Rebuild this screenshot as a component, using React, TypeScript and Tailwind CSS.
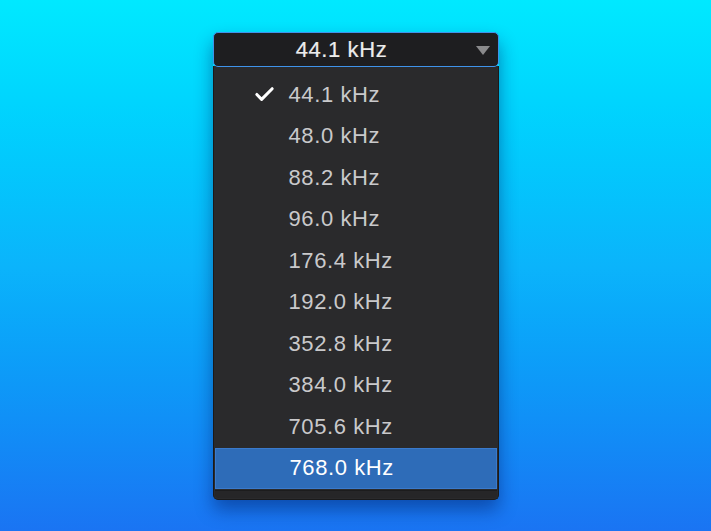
import { Check } from 'lucide-react';

const rates = ['44.1', '48.0', '88.2', '96.0', '176.4', '192.0', '352.8', '384.0', '705.6', '768.0'];

const App = () => {
  const selected = '44.1';
  const hovered = '768.0';
  return (
    <div
      className="w-[711px] h-[531px] bg-gradient-to-b from-[#00e9ff] via-[#0bb4fb] to-[#1a74f3] flex justify-center items-start pt-[32px]"
      style={{ fontFamily: '"Liberation Sans", Arial, sans-serif' }}
    >
      <div className="w-[286px] flex flex-col shadow-[0_10px_18px_rgba(0,20,90,0.45)] rounded-[5px]">
        {/* Trigger */}
        <div className="h-[35px] rounded-[5px] border-[1.5px] border-[#3f93ea] bg-[#1e1e20] flex items-center relative z-10">
          <span className="flex-1 text-center pr-[28px] text-[22px] tracking-[0.6px] text-[#ececec] leading-none [-webkit-text-stroke:0.2px_#ececec]">
            44.1 kHz
          </span>
          <svg className="absolute right-[8px] top-[13px]" width="14" height="9" viewBox="0 0 14 9">
            <path d="M0 0 L14 0 L7 9 Z" fill="#8a8a8c" />
          </svg>
        </div>
        {/* Menu */}
        <div className="bg-[#2a2a2c] border-x border-b border-[#1a1a1b] rounded-b-[5px] pt-[8px] px-[1px] pb-[1px] -mt-[1px]">
          {rates.map((r) => {
            const active = r === hovered;
            return (
              <div
                key={r}
                className={`h-[41.5px] flex items-center ${
                  active ? 'bg-[#2e6cb8] text-white border border-[#3a7acc]' : 'text-[#c9c9cb]'
                }`}
              >
                <div className="w-[74px] flex justify-end pr-[13px]">
                  {r === selected && <Check size={23} strokeWidth={3.2} className="text-white" />}
                </div>
                <span className="text-[22px] tracking-[0.6px] leading-none">{r} kHz</span>
              </div>
            );
          })}
          <div className="h-[8px] mt-[1px] border-t border-[#1c1c1d] bg-[#262628] rounded-b-[4px]" />
        </div>
      </div>
    </div>
  );
};

export default App;
